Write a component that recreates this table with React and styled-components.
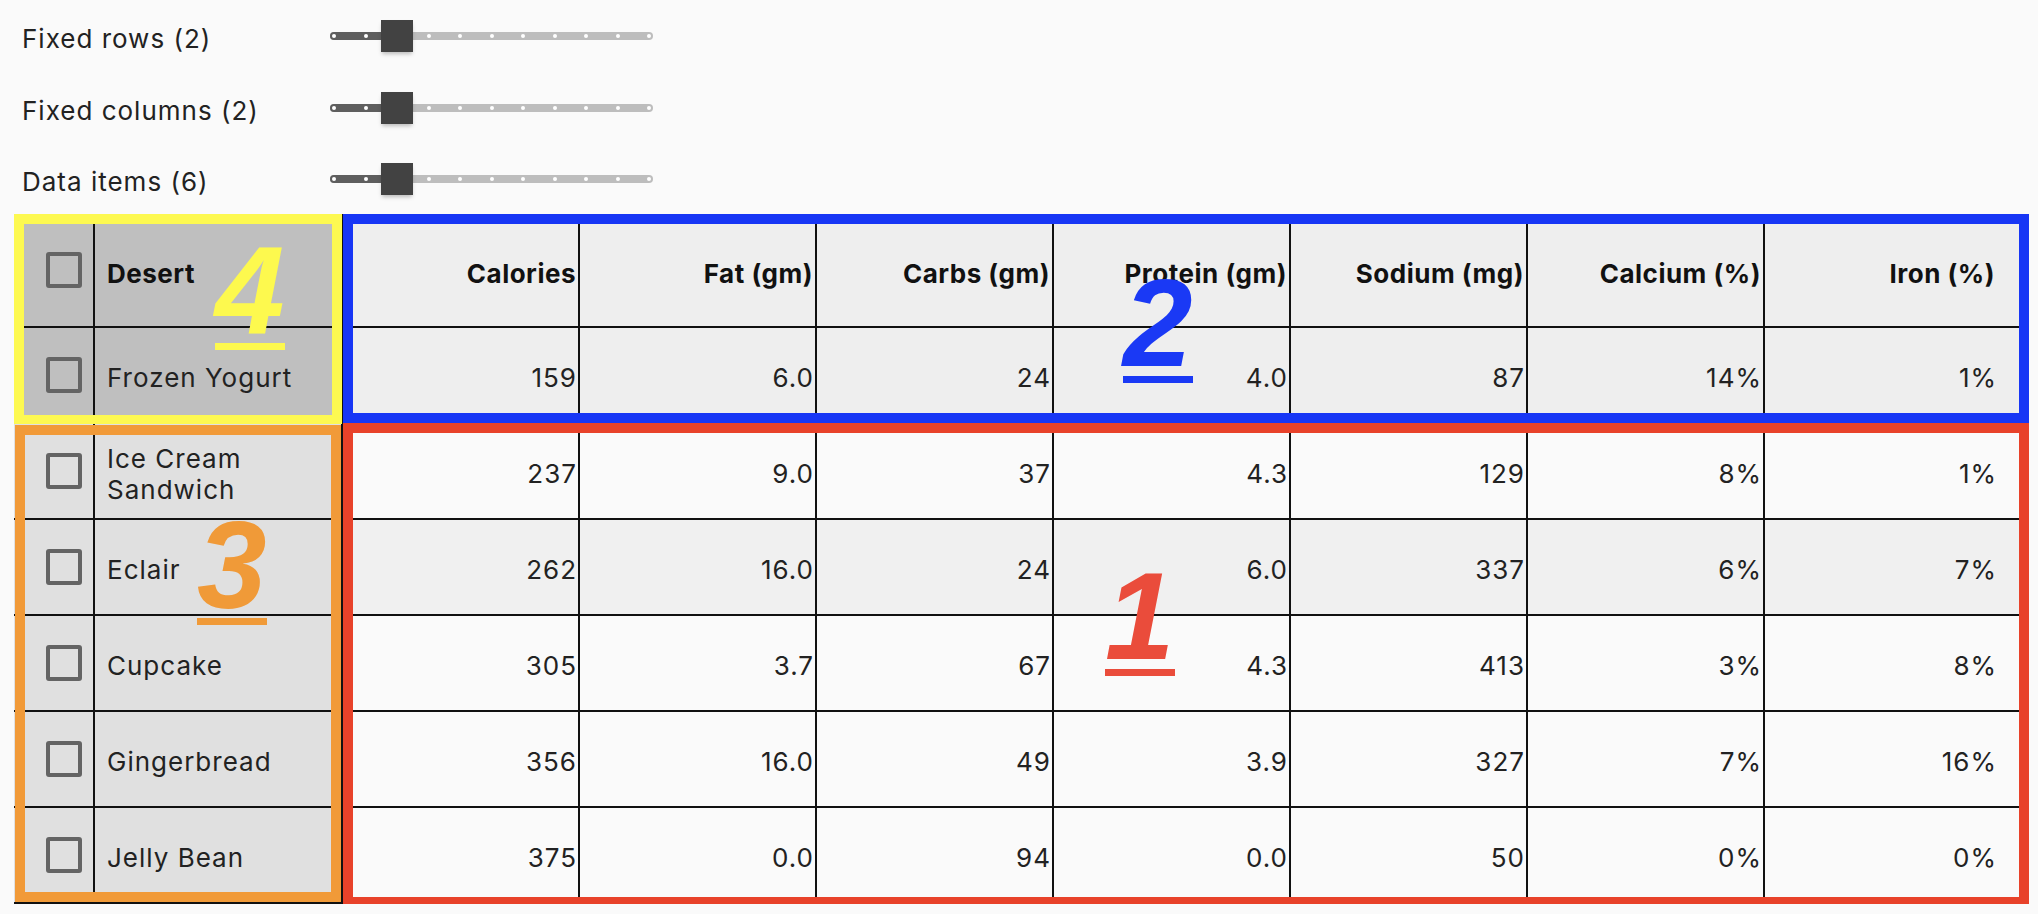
import styled, { createGlobalStyle } from "styled-components";

const GlobalStyle = createGlobalStyle`
  body {
    margin: 0;
    background: #fafafa;
    font-family: Inter, "Noto Sans", sans-serif;
    color: #222;
  }
`;

const Page = styled.div`
  width: 2038px;
`;

const Controls = styled.div`
  display: grid;
  grid-template-columns: 308px 323px;
  grid-template-rows: 72px 72px 70px;
  align-items: center;
  padding-left: 22px;
`;

const Label = styled.span`
  font-size: 26px;
  line-height: 31px;
  letter-spacing: 1px;
  padding-top: 4px;
  color: #222;
`;

const Track = styled.div`
  position: relative;
  height: 8px;
  border-radius: 4px;
  background: #bdbdbd;
`;

const Filled = styled.div`
  position: absolute;
  left: 0;
  top: 0;
  bottom: 0;
  width: ${({ $w }) => $w}px;
  border-radius: 4px 0 0 4px;
  background: #5e5e5e;
`;

const Ticks = styled.div`
  position: relative;
  height: 100%;
  display: flex;
  align-items: center;
  justify-content: space-between;
  padding: 0 2px;
`;

const Dot = styled.span`
  width: 4px;
  height: 4px;
  border-radius: 50%;
  background: #fff;
`;

const Thumb = styled.div`
  position: absolute;
  top: -12px;
  left: ${({ $x }) => $x}px;
  width: 32px;
  height: 32px;
  background: #424242;
  box-shadow: 0 3px 4px -1px rgba(0, 0, 0, 0.25);
`;

const TRACK_W = 323;
const STEPS = 10;

const RangeSlider = ({ value }) => {
  const step = (TRACK_W - 8) / STEPS;
  const center = 4 + value * step;
  return (
    <Track>
      <Filled $w={center} />
      <Ticks>
        {Array.from({ length: STEPS + 1 }).map((_, i) => (
          <Dot key={i} />
        ))}
      </Ticks>
      <Thumb $x={center - 16} />
    </Track>
  );
};

const Table = styled.div`
  display: grid;
  grid-template-columns: 329px 1686px;
  grid-template-rows: 210px 480px;
  margin-left: 14px;
`;

const Pane = styled.div`
  position: relative;
  display: grid;
  grid-template-columns: ${({ $cols }) => $cols};
  grid-template-rows: ${({ $rows }) => $rows};
  background: ${({ $bg }) => $bg};

  &::after {
    content: "";
    position: absolute;
    inset: ${({ $inset }) => $inset};
    border: 10px solid ${({ $frame }) => $frame};
    pointer-events: none;
  }
`;

const cellPadding = ({ $right, $last, $head }) => {
  const top = $head ? "7px" : "5px";
  if (!$right) return `${top} 12px 0 12px`;
  if ($last) return `${top} ${$head ? "32px" : "30px"} 0 0`;
  return `${top} ${$head ? "2px" : "1px"} 0 0`;
};

const Cell = styled.div`
  display: flex;
  align-items: center;
  justify-content: ${({ $right }) => ($right ? "flex-end" : "flex-start")};
  padding: ${cellPadding};
  border-right: 2px solid #111;
  border-bottom: 2px solid #111;
  background: ${({ $shade }) => $shade || "transparent"};
  font-size: 26px;
  line-height: 31px;
  letter-spacing: ${({ $head }) => ($head ? "0.5px" : "1px")};
  font-weight: ${({ $head }) => ($head ? 700 : 400)};
  color: ${({ $head }) => ($head ? "#111" : "#222")};
`;

const CheckCell = styled.div`
  display: flex;
  align-items: center;
  padding-left: 32px;
  border-right: 2px solid #111;
  border-bottom: 2px solid #111;
`;

const Box = styled.span`
  width: 36px;
  height: 36px;
  box-sizing: border-box;
  border: 4px solid #646464;
  border-radius: 3px;
`;

const Marker = styled.span`
  position: absolute;
  left: ${({ $x }) => $x}px;
  top: ${({ $y }) => $y}px;
  z-index: 2;
  font-family: "Liberation Sans", Arial, sans-serif;
  font-size: 125px;
  font-weight: 700;
  font-style: italic;
  line-height: 1;
  color: ${({ $color }) => $color};

  &::after {
    content: "";
    position: absolute;
    left: 0;
    right: 0;
    top: 116px;
    height: 7px;
    background: currentColor;
  }
`;

const headers = [
  "Calories",
  "Fat (gm)",
  "Carbs (gm)",
  "Protein (gm)",
  "Sodium (mg)",
  "Calcium (%)",
  "Iron (%)",
];

const desserts = [
  ["Frozen Yogurt", "159", "6.0", "24", "4.0", "87", "14%", "1%"],
  ["Ice Cream Sandwich", "237", "9.0", "37", "4.3", "129", "8%", "1%"],
  ["Eclair", "262", "16.0", "24", "6.0", "337", "6%", "7%"],
  ["Cupcake", "305", "3.7", "67", "4.3", "413", "3%", "8%"],
  ["Gingerbread", "356", "16.0", "49", "3.9", "327", "7%", "16%"],
  ["Jelly Bean", "375", "0.0", "94", "0.0", "50", "0%", "0%"],
];

const controls = [
  ["Fixed rows (2)", 2],
  ["Fixed columns (2)", 2],
  ["Data items (6)", 2],
];

const LEFT_COLS = "81px 248px";
const RIGHT_COLS = "repeat(6, 237px) 264px";

const NameCells = ({ name, head }) => (
  <>
    <CheckCell>
      <Box />
    </CheckCell>
    <Cell $head={head}>{name}</Cell>
  </>
);

const ValueCells = ({ values, head, shade }) =>
  values.map((v, i) => (
    <Cell key={i} $right $head={head} $shade={shade} $last={i === values.length - 1}>
      {v}
    </Cell>
  ));

const App = () => {
  const [fixed, ...body] = desserts;
  return (
    <Page>
      <GlobalStyle />
      <Controls>
        {controls.map(([label, value]) => (
          <>
            <Label key={label}>{label}</Label>
            <RangeSlider key={label + "s"} value={value} />
          </>
        ))}
      </Controls>
      <Table>
        <Pane $cols={LEFT_COLS} $rows="114px 96px" $bg="#bfbfbf" $frame="#fdf951" $inset="0 1px -1px 0">
          <NameCells name="Desert" head />
          <NameCells name={fixed[0]} />
          <Marker $x={201} $y={13} $color="#fdf94e">4</Marker>
        </Pane>
        <Pane $cols={RIGHT_COLS} $rows="114px 96px" $bg="#eeeeee" $frame="#1736f5" $inset="0 0 1px 0">
          <ValueCells values={headers} head />
          <ValueCells values={fixed.slice(1)} />
          <Marker $x={780} $y={46} $color="#1a39f5">2</Marker>
        </Pane>
        <Pane $cols={LEFT_COLS} $rows="repeat(5, 96px)" $bg="#e0e0e0" $frame="#f19a38" $inset="1px 2px 2px 1px">
          {body.map((r) => (
            <NameCells key={r[0]} name={r[0]} />
          ))}
          <Marker $x={183} $y={78} $color="#f09a38">3</Marker>
        </Pane>
        <Pane $cols={RIGHT_COLS} $rows="repeat(5, 96px)" $bg="#fafafa" $frame="#e8422a" $inset="-1px 0 -3px 0">
          {body.map((r, i) => (
            <ValueCells key={r[0]} values={r.slice(1)} shade={i === 1 ? "#f0f0f0" : null} />
          ))}
          <Marker $x={762} $y={129} $color="#ea4c3b">1</Marker>
        </Pane>
      </Table>
    </Page>
  );
};

export default App;
